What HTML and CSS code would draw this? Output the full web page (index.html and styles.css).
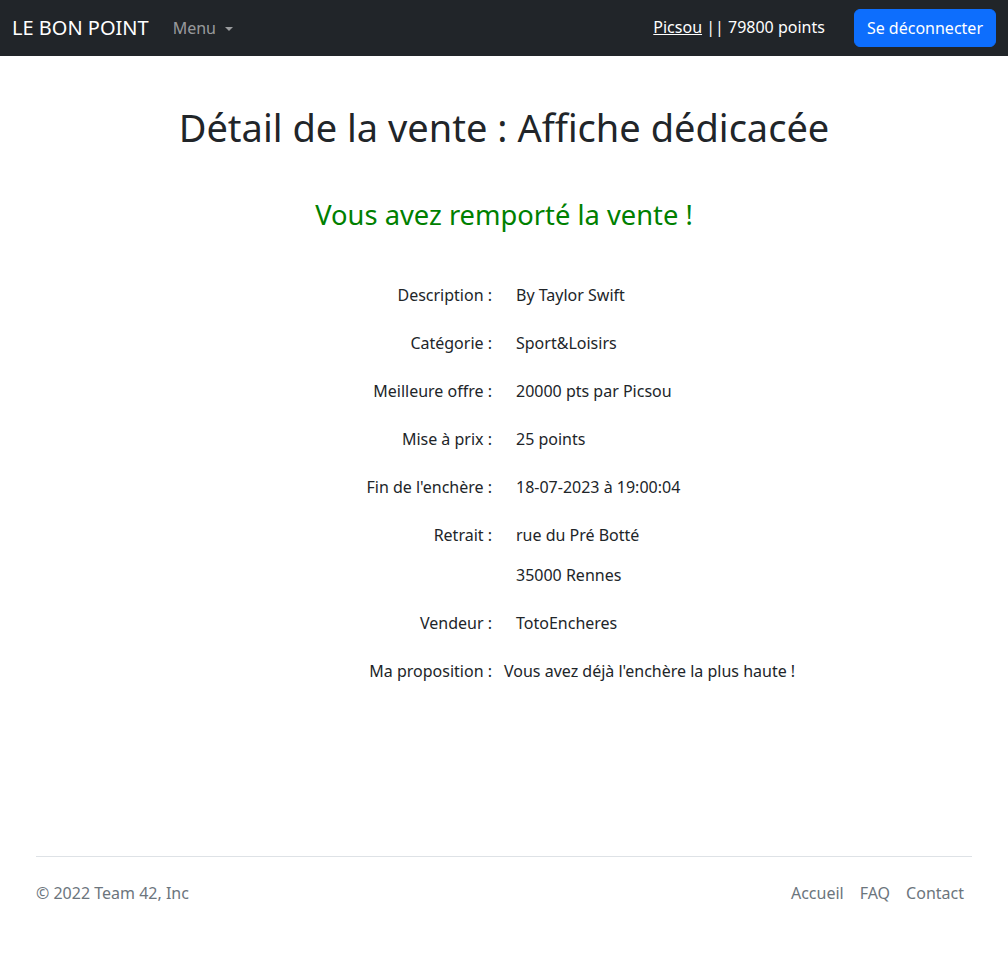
FILE: index.html
```html
<!DOCTYPE html>
<html lang="fr">
<head>
<meta charset="utf-8">
<title>Détail de la vente</title>
<link rel="stylesheet" href="styles.css">
</head>
<body>
<nav class="navbar">
  <div class="nav-left">
    <a class="brand" href="#">LE BON POINT</a>
    <a class="menu-link" href="#">Menu<span class="caret"></span></a>
  </div>
  <div class="nav-right">
    <span class="user"><a class="user-link" href="#">Picsou</a> || 79800 points</span>
    <a class="btn-primary" href="#">Se déconnecter</a>
  </div>
</nav>

<main class="container">
  <h1 class="title">Détail de la vente : Affiche dédicacée</h1>
  <h3 class="winner">Vous avez remporté la vente !</h3>

  <div class="details">
    <div class="row"><div class="label">Description :</div><div class="value">By Taylor Swift</div></div>
    <div class="row"><div class="label">Catégorie :</div><div class="value">Sport&amp;Loisirs</div></div>
    <div class="row"><div class="label">Meilleure offre :</div><div class="value">20000 pts par Picsou</div></div>
    <div class="row"><div class="label">Mise à prix :</div><div class="value">25 points</div></div>
    <div class="row"><div class="label">Fin de l'enchère :</div><div class="value">18-07-2023 à 19:00:04</div></div>
    <div class="row"><div class="label">Retrait :</div><div class="value"><p class="addr">rue du Pré Botté</p><p class="addr last">35000 Rennes</p></div></div>
    <div class="row"><div class="label">Vendeur :</div><div class="value">TotoEncheres</div></div>
    <div class="row"><div class="label">Ma proposition :</div><div class="value tight">Vous avez déjà l'enchère la plus haute !</div></div>
  </div>
</main>

<div class="container footer-wrap">
  <footer class="footer">
    <p class="copy">© 2022 Team 42, Inc</p>
    <ul class="footer-nav">
      <li><a href="#">Accueil</a></li>
      <li><a href="#">FAQ</a></li>
      <li><a href="#">Contact</a></li>
    </ul>
  </footer>
</div>
</body>
</html>
```

FILE: styles.css
```css
* { box-sizing: border-box; }
html, body { margin: 0; padding: 0; }
body {
  font-family: "Noto Sans", "Liberation Sans", sans-serif;
  font-size: 16px;
  line-height: 1.5;
  color: #212529;
  background: #fff;
}
a { text-decoration: none; }

.navbar {
  height: 56px;
  background: #212529;
  padding: 8px 12px;
  display: flex;
  align-items: center;
  justify-content: space-between;
}
.nav-left { display: flex; align-items: center; }
.brand {
  color: #fff;
  font-size: 20px;
  line-height: 30px;
  padding: 5px 0;
  margin-right: 16px;
}
.menu-link {
  color: rgba(255,255,255,0.55);
  padding: 8px;
  display: flex;
  align-items: center;
}
.caret {
  display: inline-block;
  margin-left: 9px;
  border-top: 4px solid;
  border-left: 4px solid transparent;
  border-right: 4px solid transparent;
  margin-top: 1px;
}
.nav-right { display: flex; align-items: center; }
.user { color: #fff; margin-right: 29px; margin-top: -2px; }
.user-link { color: #fff; text-decoration: underline; }
.btn-primary {
  display: inline-block;
  background: #0d6efd;
  border: 1px solid #0d6efd;
  color: #fff;
  padding: 6px 12px;
  line-height: 24px;
  border-radius: 6px;
}

.container {
  width: 960px;
  margin: 0 auto;
  padding: 0 12px;
}
.title {
  font-size: 38px;
  font-weight: 400;
  line-height: 1.2;
  text-align: center;
  margin: 49px 0 0;
}
.winner {
  font-size: 27.3px;
  font-weight: 400;
  line-height: 1.2;
  color: #008000;
  text-align: center;
  margin: 48px 0 0;
}
.details { margin-top: 52px; }
.row {
  display: flex;
  margin: 0 -12px 24px;
}
.label {
  width: 50%;
  padding: 0 12px;
  text-align: right;
}
.value {
  width: 50%;
  padding: 0 12px;
}
.value.tight { padding-left: 0; }
.addr { margin: 0 0 16px; }
.addr.last { margin: 0; }

.footer-wrap { margin-top: 173px; }
.footer {
  display: flex;
  justify-content: space-between;
  align-items: center;
  padding: 16px 0;
  margin: 24px 0;
  border-top: 1px solid #dee2e6;
}
.copy { margin: 0; color: #6c757d; }
.footer-nav {
  list-style: none;
  margin: 0;
  padding: 0;
  display: flex;
}
.footer-nav a {
  display: block;
  padding: 8px;
  color: #6c757d;
}
```
